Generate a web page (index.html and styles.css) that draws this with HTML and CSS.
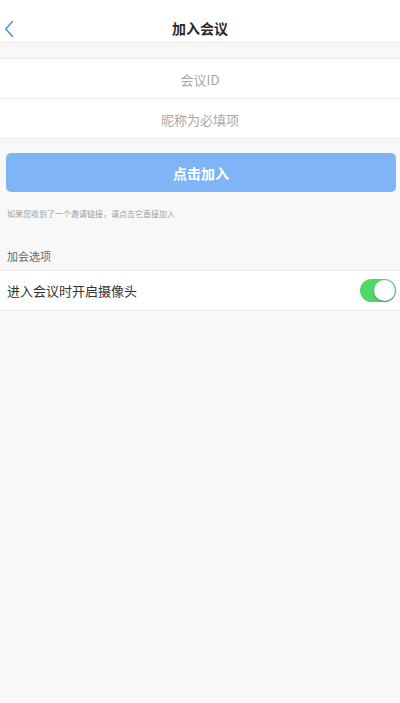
FILE: index.html
```html
<!DOCTYPE html>
<html lang="zh">
<head>
<meta charset="utf-8">
<link rel="stylesheet" href="styles.css">
</head>
<body>
<div class="page">
  <header class="nav">
    <svg class="back" width="10" height="18" viewBox="0 0 10 18"><path d="M8.5 1.5 L1.8 9 L8.5 16.5" fill="none" stroke="#5b8fd0" stroke-width="1.6" stroke-linecap="round" stroke-linejoin="round"/></svg>
    <div class="title">加入会议</div>
  </header>
  <div class="gap"></div>
  <div class="inputs">
    <div class="field">会议ID</div>
    <div class="field">昵称为必填项</div>
  </div>
  <div class="btn-wrap">
    <div class="btn">点击加入</div>
  </div>
  <div class="hint">如果您收到了一个邀请链接，请点击它直接加入</div>
  <div class="section">加会选项</div>
  <div class="row">
    <span class="row-label">进入会议时开启摄像头</span>
    <span class="toggle"><span class="knob"></span></span>
  </div>
</div>
</body>
</html>
```

FILE: styles.css
```css
html, body {
  margin: 0;
  padding: 0;
  background: #f8f8f8;
  font-family: "Noto Sans CJK SC", "Noto Sans", sans-serif;
}
.page {
  width: 400px;
  min-height: 703px;
  background: #f8f8f8;
}
.nav {
  height: 43px;
  background: #fff;
  border-bottom: 1px solid #ececec;
  display: flex;
  align-items: center;
  justify-content: center;
  position: relative;
  box-sizing: border-box;
  padding-top: 14px;
}
.back {
  position: absolute;
  left: 4px;
  top: 20px;
}
.title {
  font-size: 14px;
  font-weight: 700;
  color: #2a2a2a;
  line-height: 20px;
}
.gap {
  height: 15px;
}
.inputs {
  background: #fff;
  border-top: 1px solid #ececec;
}
.field {
  border-bottom: 1px solid #ececec;
  display: flex;
  align-items: center;
  justify-content: center;
  font-size: 13px;
  color: #a8a8a8;
  padding-top: 1px;
  height: 38px;
}
.btn-wrap {
  padding: 14px 4px 0 6px;
}
.btn {
  height: 39px;
  border-radius: 5px;
  background: #7fb5f7;
  color: #fff;
  font-size: 14px;
  font-weight: 700;
  display: flex;
  align-items: center;
  justify-content: center;
}
.hint {
  font-size: 8px;
  color: #a0a0a0;
  padding: 16px 0 0 7px;
  line-height: 12px;
}
.section {
  font-size: 11px;
  color: #666;
  padding: 28px 0 0 7px;
  line-height: 16px;
  height: 22px;
}
.row {
  background: #fff;
  border-top: 1px solid #ececec;
  border-bottom: 1px solid #ececec;
  height: 39px;
  display: flex;
  align-items: center;
  justify-content: space-between;
  padding: 0 4px 0 7px;
}
.row-label {
  font-size: 13px;
  color: #333;
}
.toggle {
  width: 36px;
  height: 23px;
  border-radius: 12px;
  background: #4fd868;
  position: relative;
  display: inline-block;
}
.knob {
  position: absolute;
  right: 1px;
  top: 1px;
  width: 21px;
  height: 21px;
  border-radius: 50%;
  background: #fff;
  box-shadow: 0 1px 2px rgba(0,0,0,0.3);
}
```
